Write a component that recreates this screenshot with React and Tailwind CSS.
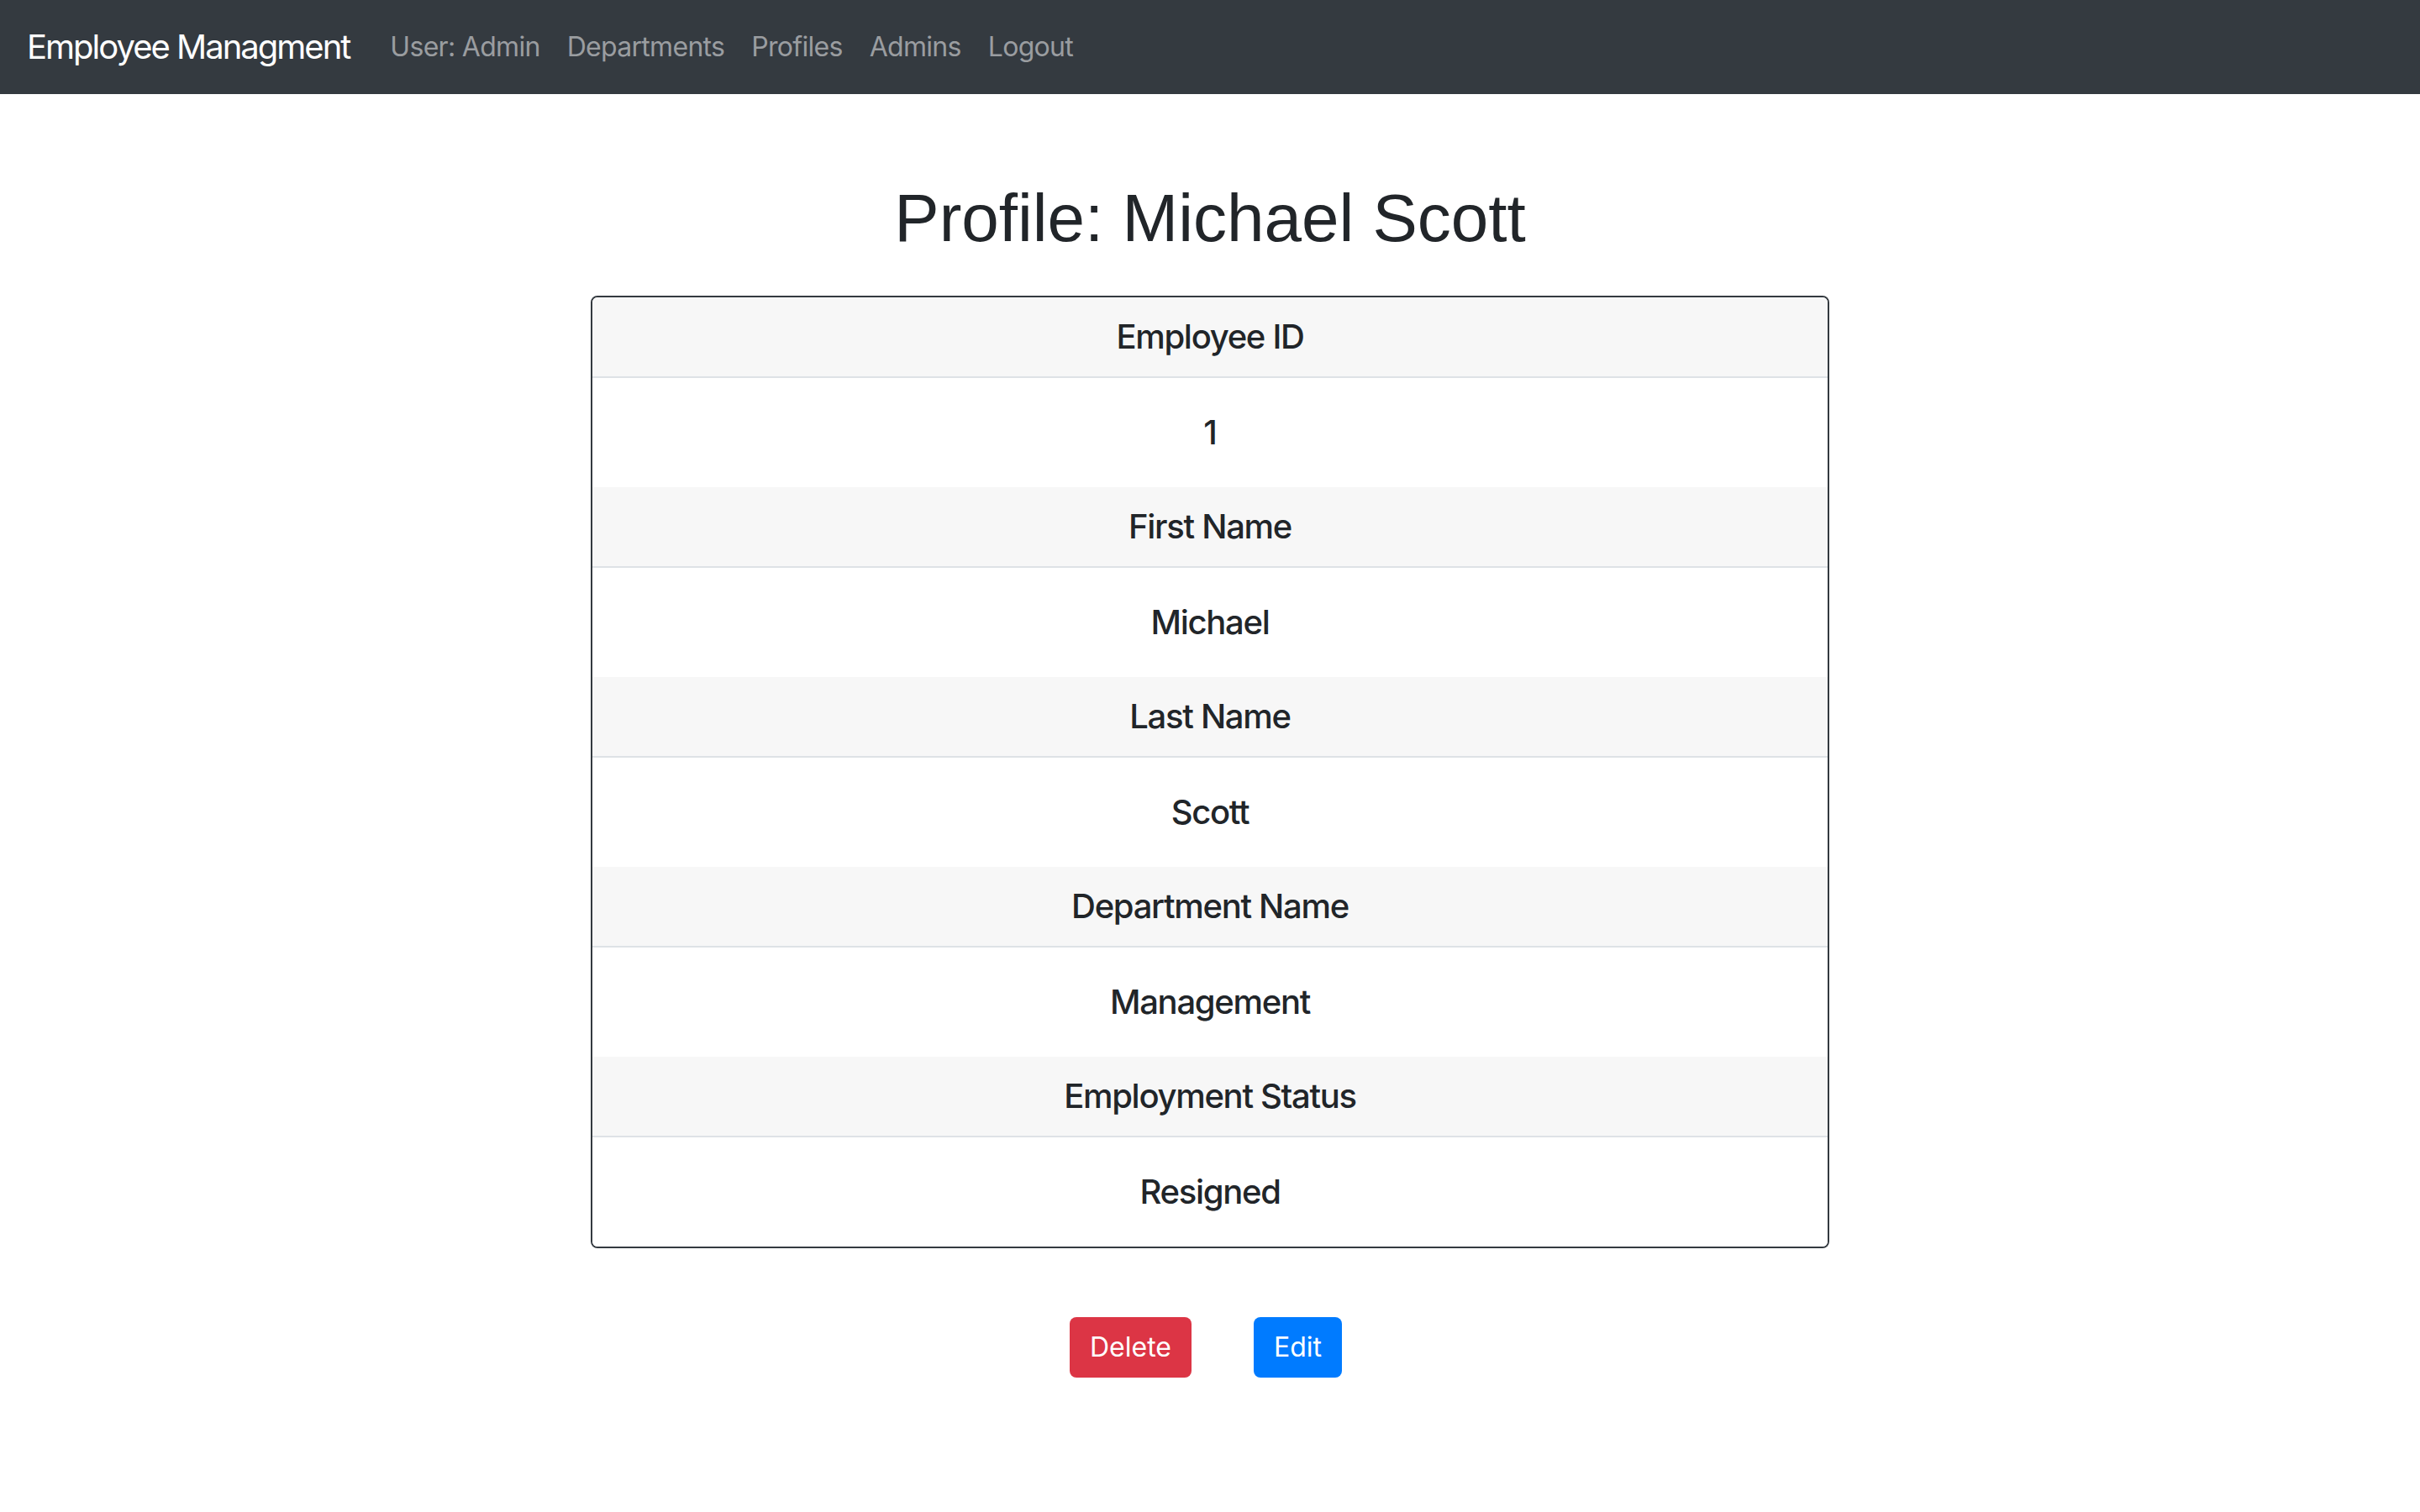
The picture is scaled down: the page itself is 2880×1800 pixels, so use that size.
import React from "react";

const rows = [
  ["Employee ID", "1"],
  ["First Name", "Michael"],
  ["Last Name", "Scott"],
  ["Department Name", "Management"],
  ["Employment Status", "Resigned"],
];

export default function App() {
  return (
    <div className="min-h-screen bg-white font-['Inter','Noto_Sans',sans-serif] text-[#212529]">
      <nav className="h-[112px] bg-[#343a40] flex items-center px-[32px]">
        <span className="text-white text-[40px] leading-[60px] tracking-[-2px] mr-[32px]">Employee Managment</span>
        <div className="flex items-center">
          {["User: Admin", "Departments", "Profiles", "Admins", "Logout"].map((l) => (
            <span key={l} className="px-[16px] text-[32px] leading-[48px] tracking-[-0.7px] text-[#9a9da0]">
              {l}
            </span>
          ))}
        </div>
      </nav>
      <main className="flex flex-col items-center">
        <h1 className="mt-[100px] text-[80px] leading-[96px] font-['Liberation_Sans','Helvetica',sans-serif] text-[#212529]">
          Profile: Michael Scott
        </h1>
        <div className="mt-[44px] w-[1474px] border-2 border-[#343a40] rounded-[8px] overflow-hidden">
          {rows.map(([k, v]) => (
            <React.Fragment key={k}>
              <div className="h-[96px] bg-[#f7f7f7] border-b-2 border-[#dee2e6] flex items-center justify-center text-[40px] font-medium tracking-[-1.3px]">
                {k}
              </div>
              <div className="h-[130px] bg-white flex items-center justify-center text-[40px] font-medium tracking-[-1.3px]">
                {v}
              </div>
            </React.Fragment>
          ))}
        </div>
        <div className="mt-[82px] mr-[10px] flex gap-[74px]">
          <button className="px-[24px] py-[12px] text-[32px] leading-[48px] rounded-[8px] bg-[#dc3545] text-white">Delete</button>
          <button className="px-[24px] py-[12px] text-[32px] leading-[48px] rounded-[8px] bg-[#007bff] text-white">Edit</button>
        </div>
      </main>
    </div>
  );
}
